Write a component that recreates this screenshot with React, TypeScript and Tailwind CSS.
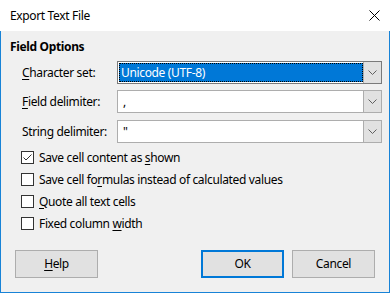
import React from "react";

const font = { fontFamily: '"Noto Sans", "Open Sans", sans-serif' };

function Chevron() {
  return (
    <svg width="9" height="5" viewBox="0 0 9 5" className="block">
      <path d="M0.5 0.5 L4.5 4.5 L8.5 0.5" fill="none" stroke="#606060" strokeWidth="1" />
    </svg>
  );
}

function Combo({ value, selected, dark }: { value: string; selected?: boolean; dark?: boolean }) {
  return (
    <div
      className={`flex w-[265px] h-[23px] border bg-white ${dark ? "border-[#7a7a7a]" : "border-[#adadad]"}`}
    >
      <div className="flex-1 flex items-stretch p-[1px] pr-0">
        {selected ? (
          <div className="flex-1 bg-[#0078d7] outline-1 outline-dotted outline-black -outline-offset-1 text-white flex items-center pl-[2px] leading-none">
            {value}
          </div>
        ) : (
          <div className="flex-1 flex items-center pl-[4px] text-black leading-none">{value}</div>
        )}
      </div>
      <div className="w-[18px] bg-[#e1e1e1] border-l border-[#adadad] flex items-center justify-center">
        <Chevron />
      </div>
    </div>
  );
}

function Row({ label, value, selected, mt }: { label: [string, string, string]; value: string; selected?: boolean; mt: string }) {
  return (
    <div className={`flex items-center ${mt}`}>
      <div className="w-[95px] pl-[21px] box-content whitespace-nowrap">
        {label[0]}
        <span className="underline underline-offset-2">{label[1]}</span>
        {label[2]}
      </div>
      <Combo value={value} selected={selected} dark={selected} />
    </div>
  );
}

function Check({ checked, parts, mt }: { checked?: boolean; parts: [string, string, string]; mt?: string }) {
  return (
    <div className={`flex items-center h-[13px] ${mt ?? ""}`}>
      <div className="w-[13px] h-[13px] border border-[#333333] bg-white flex items-center justify-center ml-[20px]">
        {checked && (
          <svg width="11" height="11" viewBox="0 0 11 11" className="block">
            <path d="M1.5 5.5 L4 8 L9.5 2.5" fill="none" stroke="#333333" strokeWidth="1" />
          </svg>
        )}
      </div>
      <div className="ml-[5px] whitespace-nowrap leading-none">
        {parts[0]}
        <span className="underline underline-offset-2">{parts[1]}</span>
        {parts[2]}
      </div>
    </div>
  );
}

function Btn({ children, primary }: { children: React.ReactNode; primary?: boolean }) {
  return (
    <div
      className={`w-[83px] h-[28px] bg-[#e1e1e1] flex items-center justify-center ${
        primary ? "border-2 border-[#0078d7]" : "border border-[#adadad]"
      }`}
    >
      {children}
    </div>
  );
}

export default function App() {
  return (
    <div className="w-[390px] h-[293px] flex flex-col text-[12px] tracking-[-0.35px] text-black" style={font}>
      <div className="h-[31px] bg-white flex items-center justify-between shrink-0">
        <div className="pl-[10px]">Export Text File</div>
        <svg width="11" height="11" viewBox="0 0 11 11" className="mr-[10px]">
          <path d="M0.5 0.5 L10.5 10.5 M10.5 0.5 L0.5 10.5" stroke="#000" strokeWidth="1" />
        </svg>
      </div>
      <div className="flex-1 bg-[#f0f0f0] border-l border-r border-b border-[#1883d7] flex flex-col">
        <div className="pl-[9px] mt-[8px] font-bold leading-[16px]">Field Options</div>
        <Row label={["", "C", "haracter set:"]} value="Unicode (UTF-8)" selected mt="mt-[6px]" />
        <Row label={["", "F", "ield delimiter:"]} value="," mt="mt-[6px]" />
        <Row label={["Strin", "g", " delimiter:"]} value={'"'} mt="mt-[7px]" />
        <Check checked parts={["Save cell content as ", "s", "hown"]} mt="mt-[8px]" />
        <Check parts={["Save cell fo", "r", "mulas instead of calculated values"]} mt="mt-[9px]" />
        <Check parts={["", "Q", "uote all text cells"]} mt="mt-[9px]" />
        <Check parts={["Fixed column ", "w", "idth"]} mt="mt-[9px]" />
        <div className="flex mt-[20px]">
          <div className="ml-[14px]">
            <Btn>
              <span>
                <span className="underline underline-offset-2">H</span>elp
              </span>
            </Btn>
          </div>
          <div className="ml-[103px]">
            <Btn primary>OK</Btn>
          </div>
          <div className="ml-[8px]">
            <Btn>Cancel</Btn>
          </div>
        </div>
      </div>
    </div>
  );
}
